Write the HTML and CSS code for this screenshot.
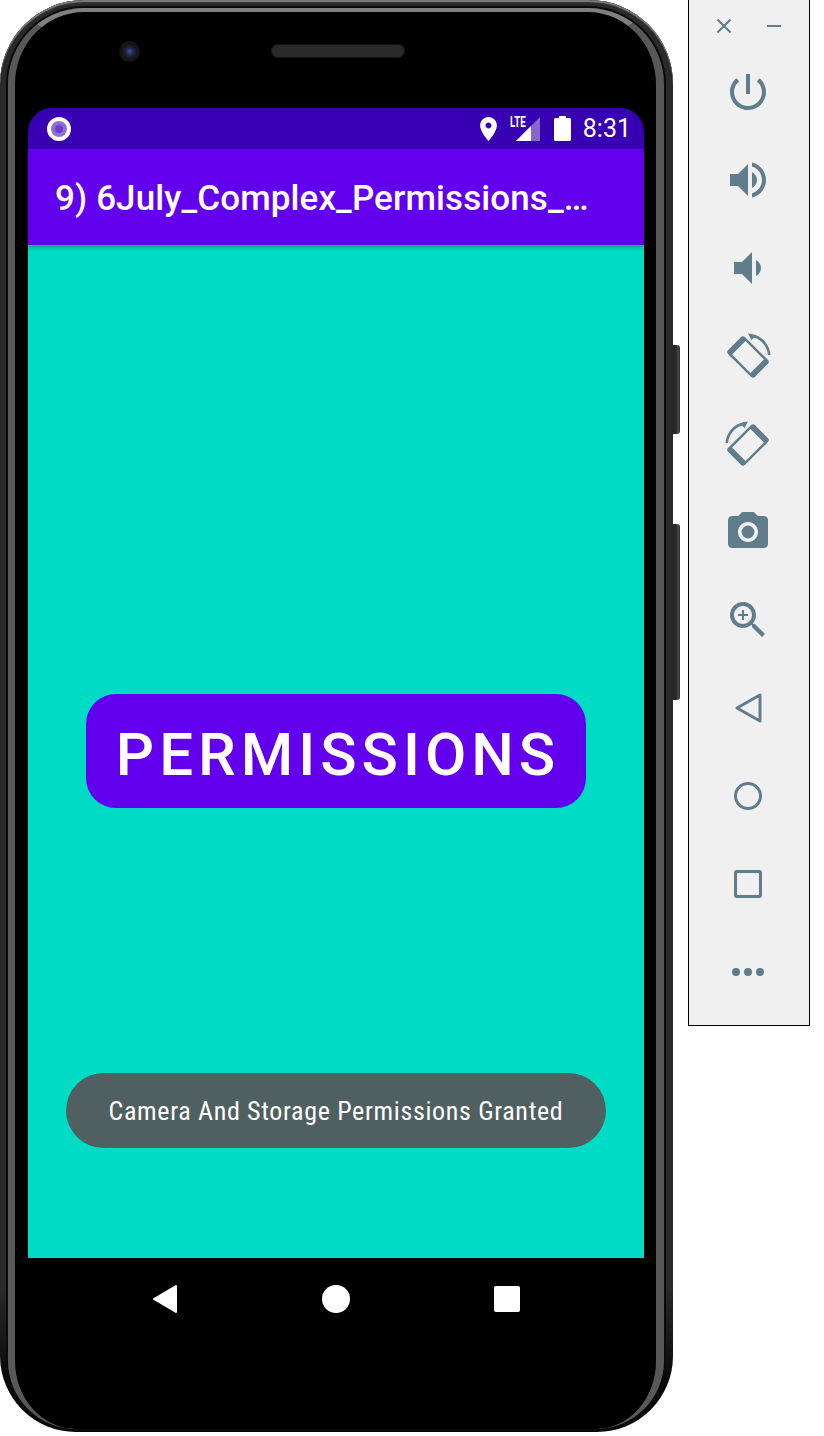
FILE: index.html
```html
<!DOCTYPE html>
<html lang="en">
<head>
	<meta charset="UTF-8">
	<meta name="viewport" content="width=device-width, initial-scale=1.0">
	<title>Emulator</title>
	<link rel="stylesheet" href="styles.css">
</head>
<body>
	<div class="phone">
		<div class="side-btn side-power"></div>
		<div class="side-btn side-volume"></div>
		<div class="bezel-top">
			<div class="camera"></div>
			<div class="speaker"></div>
		</div>
		<div class="screen">
			<div class="status-bar">
				<div class="notif-ring"><div class="notif-dot"></div></div>
				<div class="status-right">
					<svg class="ico-place" viewBox="5 2 14 20"><path fill="#fff" d="M12 2C8.130 2 5 5.130 5 9c0 5.250 7 13 7 13s7-7.750 7-13c0-3.870-3.130-7-7-7zm0 9.500c-1.380 0-2.500-1.120-2.500-2.500s1.120-2.500 2.500-2.500 2.500 1.120 2.500 2.500-1.120 2.500-2.500 2.500z"/></svg>
					<div class="signal">
						<span class="lte">LTE</span>
						<svg class="ico-signal" viewBox="0 0 24 24">
							<path fill="#fff" fill-opacity="0.4" d="M24 0V24H0z"/>
							<path fill="#fff" d="M15 9V24H0z"/>
						</svg>
					</div>
					<svg class="ico-battery" viewBox="0 0 17 25"><path fill="#fff" d="M5 0h7v2h3.500q1.500 0 1.500 1.500V23.500q0 1.500-1.500 1.500H1.500Q0 25 0 23.500V3.500Q0 2 1.500 2H5z"/></svg>
					<span class="clock">8:31</span>
				</div>
			</div>
			<div class="app-bar">9) 6July_Complex_Permissions_…</div>
			<div class="content">
				<div class="permissions-btn">PERMISSIONS</div>
				<div class="toast"><span class="toast-text">Camera And Storage Permissions Granted</span></div>
			</div>
		</div>
		<div class="nav-bar">
			<svg class="nav-ico" viewBox="0 0 28 28"><path fill="#fff" stroke="#fff" stroke-width="2" stroke-linejoin="round" d="M3 14 25 1V27z"/></svg>
			<div class="nav-home"></div>
			<div class="nav-recent"></div>
		</div>
	</div>

	<div class="panel">
		<div class="panel-head">
			<svg class="ico-close" viewBox="0 0 16 16"><path fill="none" stroke="#607d8b" stroke-width="2" d="M1.500 1.500l13 13m0-13l-13 13"/></svg>
			<div class="ico-min"></div>
		</div>
		<div class="panel-list">
			<svg class="tool" viewBox="0 0 24 24"><path d="M13 3h-2v10h2V3zm4.830 2.170l-1.420 1.420C17.990 7.860 19 9.810 19 12c0 3.870-3.130 7-7 7s-7-3.130-7-7c0-2.190 1.010-4.140 2.580-5.420L6.170 5.170C4.230 6.820 3 9.260 3 12c0 4.970 4.030 9 9 9s9-4.030 9-9c0-2.740-1.230-5.180-3.170-6.830z"/></svg>
			<svg class="tool" viewBox="0 0 24 24"><path d="M3 9v6h4l5 5V4L7 9H3zm13.500 3c0-1.770-1.020-3.290-2.500-4.030v8.050c1.480-.73 2.500-2.250 2.500-4.020zM14 3.230v2.060c2.890.86 5 3.540 5 6.710s-2.110 5.850-5 6.710v2.060c4.010-.91 7-4.490 7-8.770s-2.990-7.860-7-8.770z"/></svg>
			<svg class="tool" viewBox="0 0 24 24"><path d="M18.500 12c0-1.770-1.020-3.290-2.500-4.030v8.050c1.480-.73 2.500-2.250 2.500-4.020zM5 9v6h4l5 5V4L9 9H5z"/></svg>
			<svg class="tool" viewBox="0 0 48 48">
				<path fill-rule="evenodd" transform="rotate(-45 24 25)" d="M15 6h18q3 0 3 3v32q0 3-3 3H15q-3 0-3-3V9q0-3 3-3zM14.500 12V38H33.500V12z"/>
				<path d="M24 1.500C36 2 45.500 11 46.500 23h-2.500C43 14 37 7.500 30 5.500l-2.500 2.500z"/>
			</svg>
			<svg class="tool" viewBox="0 0 48 48">
				<g transform="matrix(-1 0 0 1 48 0)">
					<path fill-rule="evenodd" transform="rotate(-45 24 25)" d="M15 6h18q3 0 3 3v32q0 3-3 3H15q-3 0-3-3V9q0-3 3-3zM14.500 12V38H33.500V12z"/>
					<path d="M24 1.500C36 2 45.500 11 46.500 23h-2.500C43 14 37 7.500 30 5.500l-2.500 2.500z"/>
				</g>
			</svg>
			<svg class="tool" viewBox="0 0 24 24"><circle cx="12" cy="12" r="3.200"/><path d="M9 2L7.170 4H4c-1.100 0-2 .9-2 2v12c0 1.100.9 2 2 2h16c1.100 0 2-.9 2-2V6c0-1.100-.9-2-2-2h-3.170L15 2H9zm3 15c-2.760 0-5-2.240-5-5s2.240-5 5-5 5 2.240 5 5-2.240 5-5 5z"/></svg>
			<svg class="tool" viewBox="0 0 24 24"><path d="M15.500 14h-.79l-.28-.27C15.410 12.590 16 11.110 16 9.500 16 5.910 13.090 3 9.500 3S3 5.910 3 9.500 5.910 16 9.500 16c1.610 0 3.090-.59 4.230-1.570l.27.28v.79l5 4.990L20.490 19l-4.990-5zm-6 0C7.010 14 5 11.990 5 9.500S7.010 5 9.500 5 14 7.010 14 9.500 11.990 14 9.500 14z"/><path d="M12 10h-2v2H9v-2H7V9h2V7h1v2h2v1z"/></svg>
			<svg class="tool" viewBox="0 0 48 48"><path class="line" d="M13 24 36 11V37z"/></svg>
			<svg class="tool" viewBox="0 0 48 48"><circle class="line" cx="24" cy="24" r="12.500"/></svg>
			<svg class="tool" viewBox="0 0 48 48"><rect class="line" x="11.500" y="11.500" width="25" height="25" rx="1.500"/></svg>
			<svg class="tool" viewBox="0 0 48 48"><circle cx="12" cy="24" r="4"/><circle cx="24" cy="24" r="4"/><circle cx="36" cy="24" r="4"/></svg>
		</div>
	</div>
</body>
</html>
```

FILE: styles.css
```css
html, body
{
	margin: 0;
	padding: 0;
	background: #ffffff;
}

body
{
	display: flex;
	align-items: flex-start;
	width: 824px;
	height: 1436px;
	overflow: hidden;
	font-family: Roboto, "Liberation Sans", sans-serif;
}

/* phone body */
.phone
{
	position: relative;
	box-sizing: border-box;
	width: 673px;
	height: 1432px;
	padding: 0 29px 0 28px;
	background: linear-gradient(#2a2a2a 0, #2a2a2a 90%, #0a0a0a 96%, #050505 100%);
	border-radius: 84px 84px 76px 76px;
	box-shadow: inset 0 2px 0 #787878, inset 0 3px 0 #3a3a3a;
}

/* grey inner rim, fades out towards the bottom */
.phone::before
{
	content: "";
	position: absolute;
	left: 8px;
	right: 9px;
	top: 8px;
	bottom: 3px;
	background: #000000;
	border-style: solid;
	border-color: #808080 #585858 #000000 #585858;
	border-width: 4px 8px 0 7px;
	border-radius: 76px 76px 68px 68px;
	box-shadow: 0 0 0 2px #0a0a0a;
}

.side-btn
{
	position: absolute;
	left: 673px;
	width: 7px;
	background: linear-gradient(90deg, #242424 0, #2e2e2e 50%, #4c4c4c 75%, #2a2a2a 100%);
	border-radius: 0 3px 3px 0;
}

.side-power { top: 345px; height: 89px; }
.side-volume { top: 524px; height: 176px; }

.bezel-top
{
	position: relative;
	height: 108px;
}

.camera
{
	position: absolute;
	left: 91px;
	top: 41px;
	width: 21px;
	height: 21px;
	border-radius: 50%;
	background: radial-gradient(circle, #35508f 0, #1c2748 28%, #161616 48%, #111111 100%);
}

.speaker
{
	position: absolute;
	left: 243px;
	top: 44px;
	width: 134px;
	height: 14px;
	border-radius: 7px;
	background: #2a2a2a;
	box-shadow: inset 0 0 0 1px #141414;
}

.screen
{
	position: relative;
	display: flex;
	flex-direction: column;
	width: 616px;
	height: 1150px;
	border-radius: 24px 24px 0 0;
	overflow: hidden;
}

.status-bar
{
	display: flex;
	align-items: center;
	justify-content: space-between;
	box-sizing: border-box;
	height: 41px;
	padding: 0 13px 0 19px;
	background: #3700b3;
}

.notif-ring
{
	display: flex;
	align-items: center;
	justify-content: center;
	box-sizing: border-box;
	width: 24px;
	height: 24px;
	border: 4px solid #ffffff;
	border-radius: 50%;
	background: #8f6dd6;
}

.notif-dot
{
	width: 8px;
	height: 8px;
	border-radius: 50%;
	background: #6f3ccb;
}

.status-right
{
	display: flex;
	align-items: center;
}

.ico-place
{
	width: 17px;
	height: 24px;
	margin-right: 13px;
}

.signal
{
	position: relative;
	width: 30px;
	height: 24px;
	margin-right: 14px;
}

.lte
{
	position: absolute;
	left: 0;
	top: -3px;
	font-size: 14px;
	line-height: 16px;
	font-weight: 700;
	color: #ffffff;
	transform: scaleX(0.7);
	transform-origin: left top;
}

.ico-signal
{
	position: absolute;
	right: 0;
	top: 0;
	width: 24px;
	height: 24px;
}

.ico-battery
{
	width: 17px;
	height: 25px;
	margin-right: 12px;
}

.clock
{
	font-size: 25px;
	line-height: 28px;
	color: #ffffff;
}

.app-bar
{
	position: relative;
	box-sizing: border-box;
	height: 96px;
	padding-left: 27px;
	background: #6200ee;
	color: #ffffff;
	font-size: 35px;
	font-weight: 500;
	letter-spacing: 0.1px;
	line-height: 100px;
	white-space: nowrap;
	box-shadow: 0 3px 4px rgba(0, 0, 0, 0.2);
}

.content
{
	display: flex;
	flex-direction: column;
	align-items: center;
	flex: 1;
	padding-top: 449px;
	background: #00dbc5;
}

.permissions-btn
{
	display: flex;
	align-items: center;
	justify-content: center;
	box-sizing: border-box;
	width: 500px;
	height: 114px;
	padding: 6px 0 0 4px;
	border-radius: 30px;
	background: #6200ee;
	color: #ffffff;
	font-size: 60px;
	font-weight: 500;
	letter-spacing: 5px;
}

.toast
{
	display: flex;
	align-items: center;
	justify-content: center;
	width: 540px;
	height: 75px;
	margin-top: 265px;
	border-radius: 38px;
	background: #505f5f;
}

.toast-text
{
	color: #ffffff;
	font-size: 26px;
	font-stretch: condensed;
	letter-spacing: 0.66px;
	white-space: nowrap;
}

.nav-bar
{
	position: relative;
	display: flex;
	align-items: center;
	justify-content: center;
	gap: 143px;
	height: 82px;
}

.nav-ico
{
	width: 28px;
	height: 28px;
}

.nav-home
{
	width: 28px;
	height: 28px;
	border-radius: 50%;
	background: #ffffff;
}

.nav-recent
{
	width: 26px;
	height: 26px;
	margin: 0 1px;
	border-radius: 2px;
	background: #ffffff;
}

/* emulator toolbar */
.panel
{
	box-sizing: border-box;
	display: flex;
	flex-direction: column;
	align-items: center;
	width: 122px;
	height: 1026px;
	margin-left: 15px;
	padding: 16px 2px 0 0;
	background: #f0f0f0;
	border: 1px solid #000000;
	border-top: 0;
}

.panel-head
{
	display: flex;
	align-items: center;
	justify-content: space-between;
	width: 65px;
	height: 20px;
	margin-bottom: 32px;
}

.ico-close
{
	width: 16px;
	height: 16px;
}

.ico-min
{
	width: 14px;
	height: 2px;
	background: #607d8b;
}

.panel-list
{
	display: flex;
	flex-direction: column;
	gap: 40px;
}

.tool
{
	display: block;
	width: 48px;
	height: 48px;
	fill: #607d8b;
}

.tool .line
{
	fill: none;
	stroke: #607d8b;
	stroke-width: 3;
	stroke-linejoin: round;
}
```
